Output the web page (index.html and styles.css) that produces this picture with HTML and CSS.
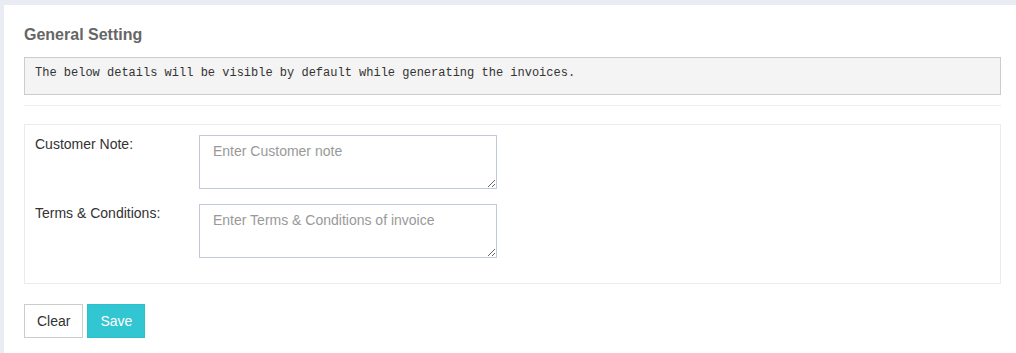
FILE: index.html
```
<!DOCTYPE html>
<html>
<head>
    <meta charset="utf-8">
    <meta name="viewport" content="initial-scale=1, width=device-width">
    <link rel="stylesheet" href="styles.css">
</head>
<body>
    <div class="setting-panel">
        <h3 class="panel-title">General Setting</h3>
        <pre class="info-note">The below details will be visible by default while generating the invoices.</pre>
        <hr class="divider">
        <div class="form-box">
            <div class="form-row">
                <label for="customerNote">Customer Note:</label>
                <textarea id="customerNote" placeholder="Enter Customer note"></textarea>
            </div>
            <div class="form-row">
                <label for="termsNote">Terms &amp; Conditions:</label>
                <textarea id="termsNote" placeholder="Enter Terms &amp; Conditions of invoice"></textarea>
            </div>
        </div>
        <div class="button-row">
            <button type="button" class="btn btn-clear" id="clearButton">Clear</button>
            <button type="button" class="btn btn-save" id="saveButton">Save</button>
        </div>
    </div>

    <script>
        const customerNote = document.getElementById('customerNote');
        const termsNote = document.getElementById('termsNote');

        // Empty both fields
        document.getElementById('clearButton').addEventListener('click', () => {
            customerNote.value = '';
            termsNote.value = '';
        });
    </script>
</body>
</html>
```

FILE: styles.css
```
body {
    margin: 0;
    padding: 5px 0 0 4px;
    background-color: #e9ecf3;
    font-family: 'Liberation Sans', Arial, sans-serif;
    font-size: 14px;
    color: #333;
}
.setting-panel {
    background-color: #fff;
    padding: 19px 15px 15px 20px;
    min-height: 314px;
}
.panel-title {
    margin: 0 0 11px;
    font-size: 16px;
    line-height: 22px;
    font-weight: bold;
    color: #666;
}
.info-note {
    margin: 0;
    padding: 7px 10px 12px;
    font-family: 'Liberation Mono', 'Courier New', monospace;
    font-size: 12px;
    line-height: 17px;
    color: #333;
    background-color: #f4f4f4;
    border: 1px solid #ccc;
}
.divider {
    margin: 10px 0 18px;
    border: none;
    border-top: 1px solid #eee;
}
.form-box {
    border: 1px solid #e7ecf1;
    padding: 10px 10px 25px;
    display: flex;
    flex-direction: column;
    gap: 15px;
}
.form-row {
    display: grid;
    grid-template-columns: 164px 298px;
    align-items: start;
}
.form-row label {
    line-height: 18px;
}
.form-row textarea {
    box-sizing: border-box;
    height: 54px;
    margin: 0;
    padding: 5px 13px 7px;
    border: 1px solid #c2cad8;
    font-family: 'Liberation Sans', Arial, sans-serif;
    font-size: 14px;
    line-height: 20px;
    color: #333;
}
.form-row textarea::placeholder {
    color: #999;
}
.button-row {
    display: flex;
    gap: 4px;
    margin-top: 20px;
}
.btn {
    padding: 6px 12px;
    font-family: 'Liberation Sans', Arial, sans-serif;
    font-size: 14px;
    line-height: 20px;
    cursor: pointer;
}
.btn-clear {
    background-color: #fff;
    border: 1px solid #ccc;
    color: #333;
}
.btn-save {
    background-color: #32c5d2;
    border: 1px solid #2fbecb;
    color: #fff;
}
```
